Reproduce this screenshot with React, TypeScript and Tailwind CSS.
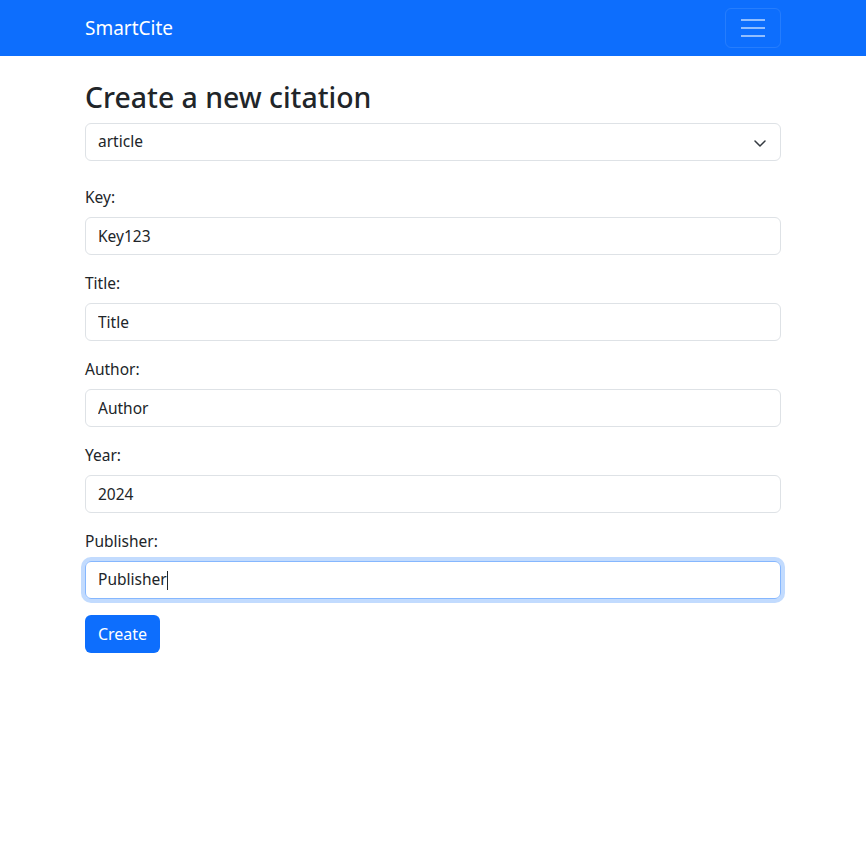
import React from 'react';

const font = { fontFamily: '"Noto Sans", "Open Sans", sans-serif' };

const fields = [
  { label: 'Key:', value: 'Key123' },
  { label: 'Title:', value: 'Title' },
  { label: 'Author:', value: 'Author' },
  { label: 'Year:', value: '2024' },
];

export default function App() {
  return (
    <div className="min-h-[850px] bg-white text-[#212529] font-['Noto_Sans',sans-serif]">
      {/* navbar */}
      <nav className="h-14 bg-[#0d6efd]">
        <div className="w-[696px] mx-auto h-full flex items-center justify-between">
          <span className="text-white text-[19px] leading-[30px]">SmartCite</span>
          <button className="w-14 h-10 rounded-md border border-white/10 flex flex-col items-center justify-center gap-[6px]">
            <span className="block w-6 h-[2px] bg-white/55" />
            <span className="block w-6 h-[2px] bg-white/55" />
            <span className="block w-6 h-[2px] bg-white/55" />
          </button>
        </div>
      </nav>

      <main className="w-[696px] mx-auto pt-6">
        <h2 className="text-[28.4px] leading-[35px] font-medium mb-2">Create a new citation</h2>

        <div className="relative h-[38px] rounded-md border border-[#dee2e6] flex items-center pl-3 text-[15.5px] mb-6">
          article
          <svg className="absolute right-[14px] top-[16px]" width="12" height="7" viewBox="0 0 12 7">
            <path d="M1 1l5 5 5-5" fill="none" stroke="#343a40" strokeWidth="1.5" strokeLinecap="round" strokeLinejoin="round" />
          </svg>
        </div>

        {fields.map((f) => (
          <div key={f.label} className="mb-4">
            <label className="block text-[15.5px] leading-6 mb-2">{f.label}</label>
            <input
              readOnly
              defaultValue={f.value}
              style={font}
              className="block w-full h-[38px] rounded-md border border-[#dee2e6] px-3 text-[15.5px] text-[#212529] outline-none"
            />
          </div>
        ))}

        <div className="mb-4">
          <label className="block text-[15.5px] leading-6 mb-2">Publisher:</label>
          <div className="h-[38px] rounded-md border border-[#86b7fe] shadow-[0_0_0_4px_rgba(13,110,253,0.25)] px-3 flex items-center text-[15.5px]">
            Publisher
            <span className="inline-block w-px h-[19px] bg-[#212529]" />
          </div>
        </div>

        <button className="h-[38px] w-[75px] flex items-center justify-center rounded-md bg-[#0d6efd] text-white text-[16px]">
          Create
        </button>
      </main>
    </div>
  );
}
